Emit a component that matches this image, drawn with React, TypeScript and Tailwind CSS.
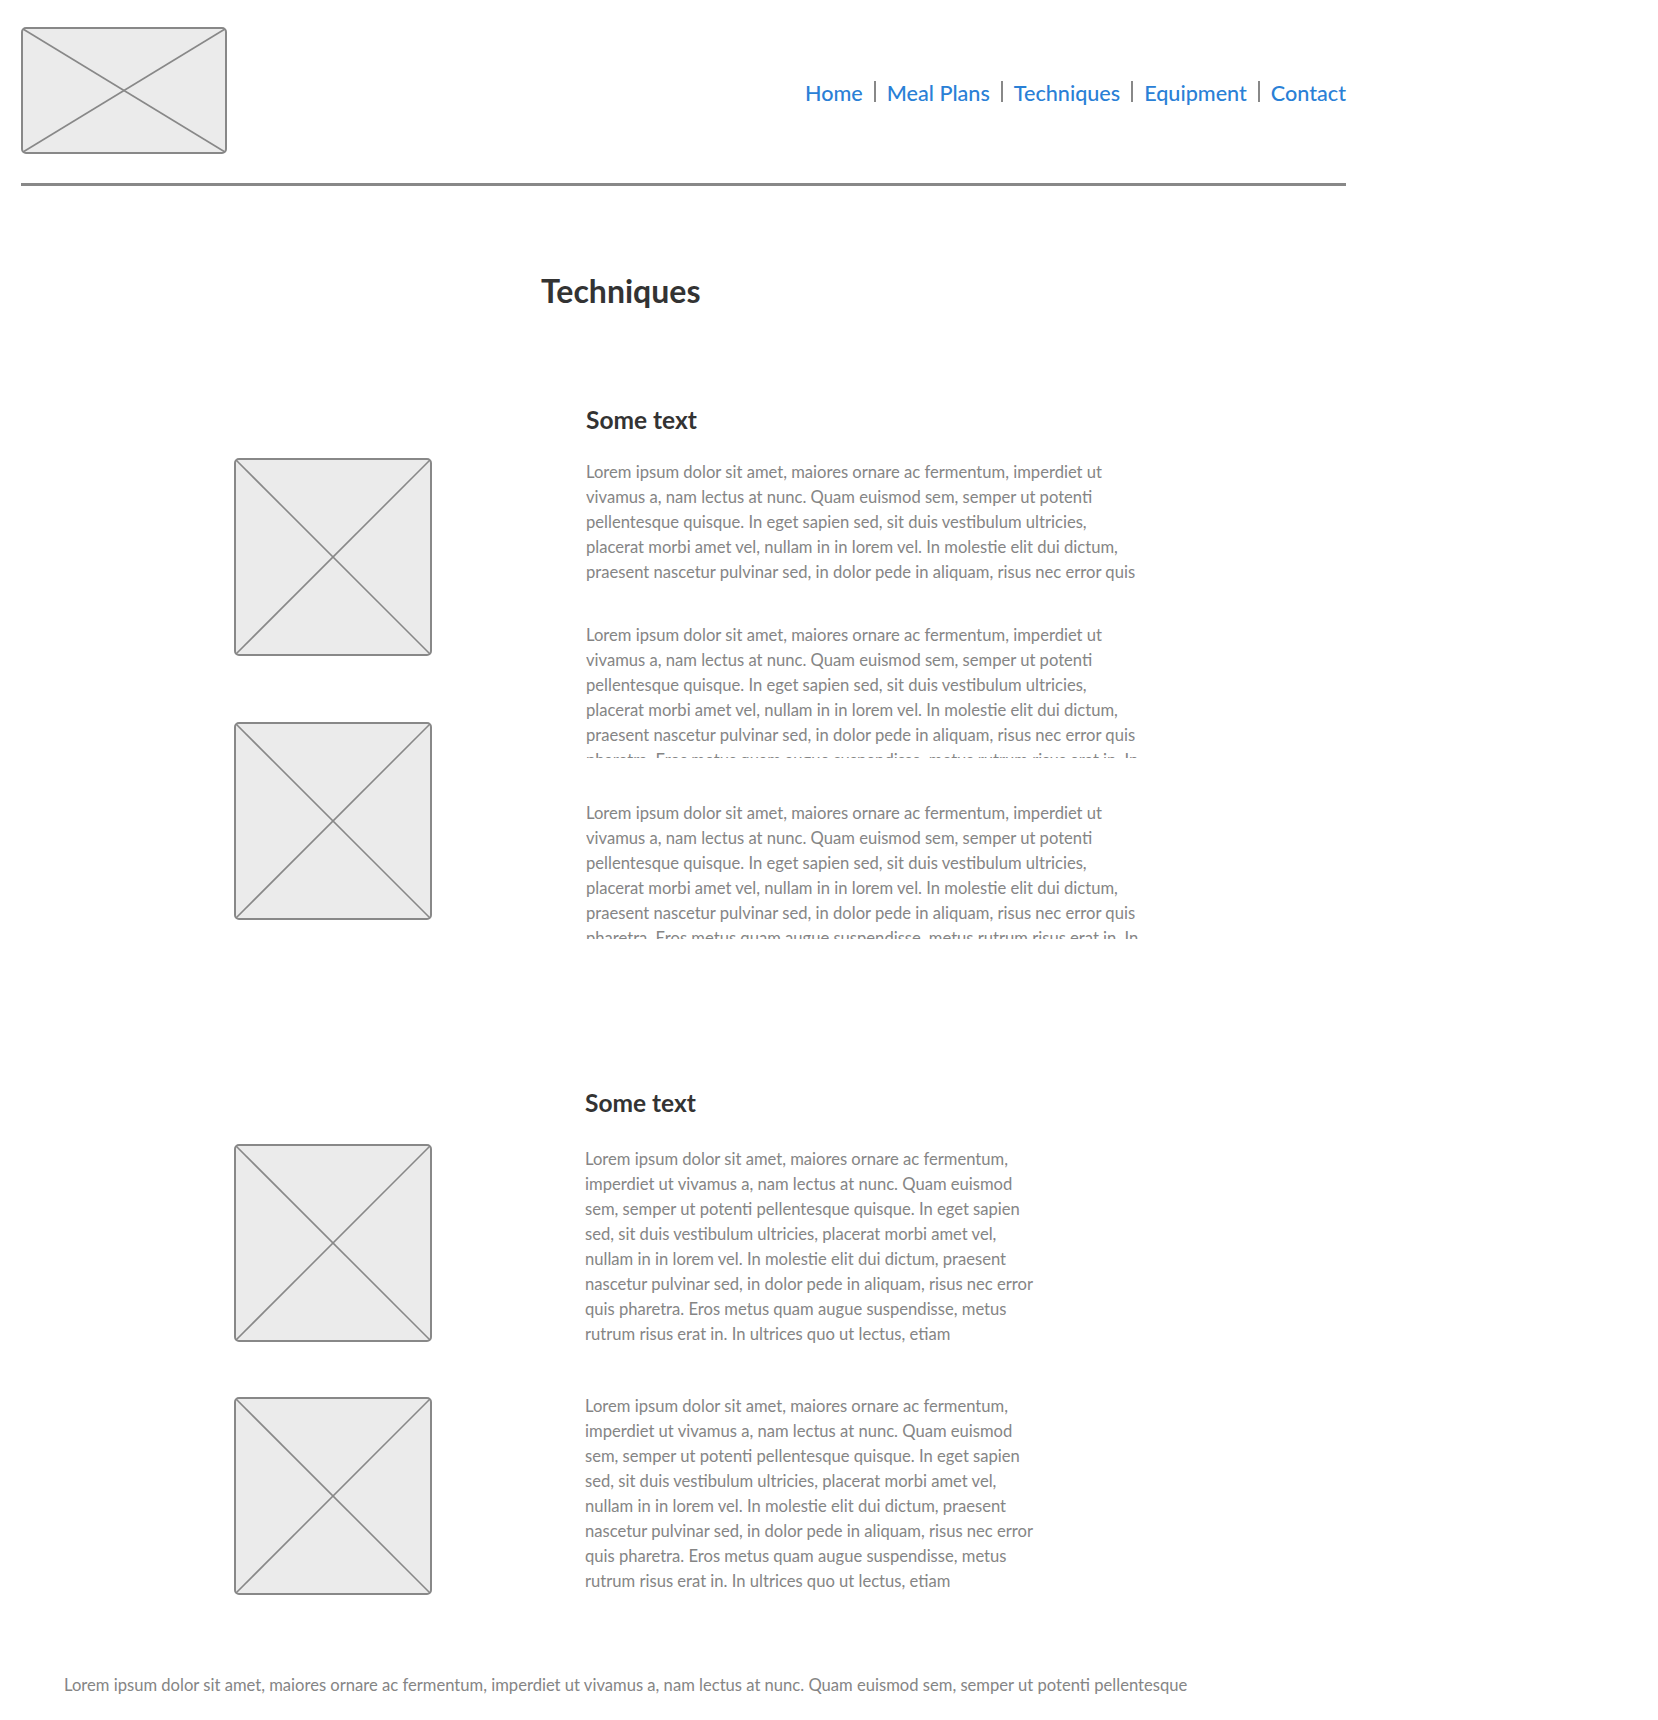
import React from "react";

const lorem =
  "Lorem ipsum dolor sit amet, maiores ornare ac fermentum, imperdiet ut vivamus a, nam lectus at nunc. Quam euismod sem, semper ut potenti pellentesque quisque. In eget sapien sed, sit duis vestibulum ultricies, placerat morbi amet vel, nullam in in lorem vel. In molestie elit dui dictum, praesent nascetur pulvinar sed, in dolor pede in aliquam, risus nec error quis pharetra. Eros metus quam augue suspendisse, metus rutrum risus erat in.  In ultrices quo ut lectus, etiam";

function Placeholder({ w, h }: { w: number; h: number }) {
  return (
    <svg width={w} height={h} viewBox={`0 0 ${w} ${h}`} className="block shrink-0">
      <rect x="1" y="1" width={w - 2} height={h - 2} rx="4" fill="#ebebeb" stroke="#888888" strokeWidth="2" />
      <line x1="2" y1="2" x2={w - 2} y2={h - 2} stroke="#888888" strokeWidth="1.6" />
      <line x1={w - 2} y1="2" x2="2" y2={h - 2} stroke="#888888" strokeWidth="1.6" />
    </svg>
  );
}

const links = ["Home", "Meal Plans", "Techniques", "Equipment", "Contact"];

export default function App() {
  return (
    <div className="w-[1658px] min-h-[1720px] bg-white font-['Lato',sans-serif] text-[16.6px] leading-[25px] text-[#858585]">
      <header className="ml-[21px] w-[1325px] pt-[27px]">
        <div className="flex items-start justify-between">
          <Placeholder w={206} h={127} />
          <nav className="mt-[52px] flex items-center text-[21.6px] leading-[28px] font-medium text-[#2a80d6]">
            {links.map((l, i) => (
              <React.Fragment key={l}>
                {i > 0 && <span className="mx-[11px] -mt-[3px] h-[21px] w-[2px] bg-[#888888]" />}
                <a href="#">{l}</a>
              </React.Fragment>
            ))}
          </nav>
        </div>
        <div className="mt-[29px] h-[3px] bg-[#888888]" />
      </header>

      <main>
        <h1 className="ml-[541px] mt-[87px] text-[32px] leading-[36px] font-bold text-[#333333]">Techniques</h1>

        <section className="mt-[97px]">
          <h2 className="ml-[586px] text-[24.5px] leading-[28px] font-bold text-[#333333]">Some text</h2>
          <div className="mt-[24px] flex">
            <div className="ml-[234px] flex w-[198px] flex-col gap-[66px]">
              <Placeholder w={198} h={198} />
              <Placeholder w={198} h={198} />
            </div>
            <div className="ml-[154px] w-[553px] pt-[2px]">
              <p className="h-[130px] overflow-hidden">{lorem}</p>
              <p className="mt-[33px] h-[135px] overflow-hidden">{lorem}</p>
              <p className="mt-[43px] h-[138px] overflow-hidden">{lorem}</p>
            </div>
          </div>
        </section>

        <section className="mt-[150px]">
          <h2 className="ml-[585px] text-[24.5px] leading-[28px] font-bold text-[#333333]">Some text</h2>
          <div className="mt-[27px] flex">
            <div className="ml-[234px] flex w-[198px] flex-col gap-[55px]">
              <Placeholder w={198} h={198} />
              <Placeholder w={198} h={198} />
            </div>
            <div className="ml-[153px] w-[452px] pt-[3px]">
              <p>{lorem}</p>
              <p className="mt-[47px]">{lorem}</p>
            </div>
          </div>
        </section>

        <p className="ml-[64px] mt-[78px] whitespace-nowrap">
          Lorem ipsum dolor sit amet, maiores ornare ac fermentum, imperdiet ut vivamus a, nam lectus at nunc. Quam euismod sem, semper ut potenti pellentesque
        </p>
      </main>
    </div>
  );
}
